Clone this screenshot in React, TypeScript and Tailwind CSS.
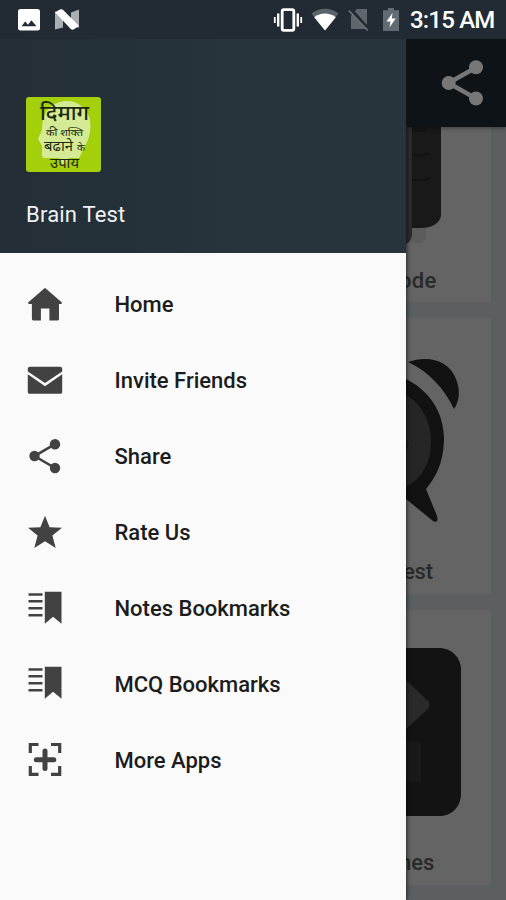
import type { ReactNode } from "react";

function HomeIcon() {
  return (
    <svg viewBox="0 0 36 36" className="size-9 fill-[#424242]">
      <path d="M17.2 1.4a1.2 1.2 0 0 1 1.6 0L34.6 15.3c.7.7.3 1.7-.7 1.7H32V32.1a1.3 1.3 0 0 1-1.3 1.3H22.4V21.6H13.9V33.4H6.2A1.3 1.3 0 0 1 4.9 32.1V17H2.1c-1 0-1.4-1-.7-1.7Z" />
    </svg>
  );
}

function MailIcon() {
  return (
    <svg viewBox="0 0 36 36" className="size-9 fill-[#424242]">
      <path d="M3 3.8H33C34.3 3.8 35.2 4.6 35.2 5.8V8.6L18 20 .8 8.6V5.8C.8 4.6 1.7 3.8 3 3.8Z" />
      <path d="M.8 11.2 18 23.3 35.2 11.2V28.9C35.2 30 34.5 30.7 33.4 30.7H2.6C1.5 30.7 .8 30 .8 28.9Z" />
    </svg>
  );
}

function ShareIcon() {
  return (
    <svg viewBox="0 0 36 36" className="size-9 fill-[#424242] stroke-[#424242]">
      <path d="M28 5.2 7.5 17 28 29" fill="none" strokeWidth="2.6" />
      <circle cx="28" cy="5.2" r="5.2" stroke="none" />
      <circle cx="7.5" cy="17" r="5.2" stroke="none" />
      <circle cx="28" cy="29" r="5.2" stroke="none" />
    </svg>
  );
}

function StarIcon() {
  return (
    <svg viewBox="0 0 36 36" className="size-9 fill-[#424242]">
      <path d="M18 .8 22.6 12.2 35 12.8 25.4 20.6 28.7 33 18 26.3 7.3 33 10.6 20.6 1 12.8 13.4 12.2Z" />
    </svg>
  );
}

function BookmarkIcon() {
  return (
    <svg viewBox="0 0 36 36" className="size-9 fill-[#424242]">
      <path d="M1.5 2.3H15.5V4.8H1.5ZM1.5 9.1H15.5V11.6H1.5ZM1.5 15.9H15.5V18.4H1.5ZM1.5 22.9H15.5V25.4H1.5Z" />
      <path d="M17.8 .7H34.5V32.8L26.1 25.7 17.8 32.8Z" />
    </svg>
  );
}

function MoreIcon() {
  return (
    <svg viewBox="0 0 36 36" className="size-9" fill="none" stroke="#424242">
      <path d="M3.3 11V2.5H11.5M24 2.5H32.7V11M3.3 24V32.3H11.5M24 32.3H32.7V24" strokeWidth="3.2" />
      <path d="M18 9V26.4M9.3 17.7H26.8" strokeWidth="5" strokeLinecap="round" />
    </svg>
  );
}

const items: { label: string; icon: ReactNode }[] = [
  { label: "Home", icon: <HomeIcon /> },
  { label: "Invite Friends", icon: <MailIcon /> },
  { label: "Share", icon: <ShareIcon /> },
  { label: "Rate Us", icon: <StarIcon /> },
  { label: "Notes Bookmarks", icon: <BookmarkIcon /> },
  { label: "MCQ Bookmarks", icon: <BookmarkIcon /> },
  { label: "More Apps", icon: <MoreIcon /> },
];

function StatusBar() {
  return (
    <div className="flex h-[39px] shrink-0 items-center bg-[#222b33] pr-3 pl-[18px] text-white">
      <svg viewBox="0 0 22 22" className="size-[22px]">
        <rect x="0" y="0" width="22" height="21.5" rx="2.5" fill="#fff" />
        <path d="M3.5 17.3 7.2 12.6 10 15.8 13.4 11.3 18.5 17.3Z" fill="#222c34" />
      </svg>
      <svg viewBox="0 0 26 22" className="ml-[14px] h-[22px] w-[26px]">
        <path d="M1 2.5 9 5V18.5L1 20.5ZM25 .5V19L17 15.5V3.5Z" fill="#a9afb2" />
        <path d="M1 3.2 6.5 .3Q8 0 9.2 1L25 17 19.5 20.5Q18 21 16.500 19.8Z" fill="#fff" />
      </svg>

      <div className="ml-auto flex items-center">
        <svg viewBox="0 0 30 24" className="h-6 w-[30px]" fill="none" stroke="#fff">
          <rect x="9.2" y="1.7" width="11.6" height="20.6" rx="1.5" strokeWidth="2.8" />
          <path d="M5.2 5.5V18.5M24.8 5.5V18.5" strokeWidth="2.4" />
          <path d="M1.8 9V15M28.2 9V15" strokeWidth="1.8" />
        </svg>
        <svg viewBox="0 0 28 24" className="ml-[8px] h-6 w-7">
          <path d="M.5 5.5C8 -.8 20 -.8 27.5 5.5L14 22.5Z" fill="#5b646a" />
          <path d="M3.2 9.2C9.5 4.2 18.5 4.2 24.8 9.2L14 22.5Z" fill="#fff" />
        </svg>
        <svg viewBox="0 0 22 24" className="ml-[9px] h-6 w-[22px]">
          <path d="M9 1H19V21H3V7.5Z" fill="#5f676d" />
          <path d="M2 1 20 21" stroke="#222b33" strokeWidth="4" />
          <path d="M.8 2.5 19.8 22.5" stroke="#6b7378" strokeWidth="1.8" />
        </svg>
        <svg viewBox="0 0 16 24" className="ml-[13px] h-6 w-4">
          <path d="M5 0H11V2.2H16V23H0V2.2H5Z" fill="#626b71" />
          <path d="M9.5 5 3.5 13.5H7.4L6.5 19.5 12.7 10.5H8.8Z" fill="#fff" />
        </svg>
        <span className="ml-[11px] w-[84px] text-[24px] leading-none font-medium tracking-[-0.8px] whitespace-nowrap">
          3:15 AM
        </span>
      </div>
    </div>
  );
}

function AppLogo() {
  return (
    <svg viewBox="0 0 75 75" className="size-[75px]">
      <rect width="75" height="75" rx="3" fill="#a4cf0b" />
      <path
        d="M34 5C49 1 61 10 64 23C66 37 61 45 57 53L53 61H43L38 69L33 61H18Q15 60 16 54V49L12 42L16 33C16 17 22 8 34 5Z"
        fill="#d5ea94"
      />
      <g fill="#1d2811" textAnchor="middle" fontFamily="'Noto Sans', 'Noto Sans Devanagari', sans-serif">
        <text x="38.5" y="22.5" fontSize="20" fontWeight="500" textLength="49" lengthAdjust="spacingAndGlyphs">दिमाग</text>
        <text x="38.5" y="38.5" fontSize="10" textLength="37" lengthAdjust="spacingAndGlyphs">की शक्ति</text>
        <text x="32.5" y="54" fontSize="14" textLength="29" lengthAdjust="spacingAndGlyphs">बढाने</text>
        <text x="55" y="54" fontSize="9" textLength="8" lengthAdjust="spacingAndGlyphs">के</text>
        <text x="38.5" y="70.5" fontSize="14" textLength="29" lengthAdjust="spacingAndGlyphs">उपाय</text>
      </g>
    </svg>
  );
}

function Drawer() {
  return (
    <aside className="z-10 flex w-[406px] shrink-0 flex-col bg-[#fafafa] shadow-[1px_0_4px_rgba(0,0,0,0.6)]">
      <header className="flex h-[214px] shrink-0 flex-col bg-linear-to-r from-[#232e37] to-[#27343c] to-60% pt-[58px] pl-[26px]">
        <AppLogo />
        <h1 className="mt-[30px] text-[22px] leading-[26px] tracking-[0.2px] text-[#f0f3f5]">Brain Test</h1>
      </header>
      <nav className="mt-[14px] flex flex-col">
        {items.map((item) => (
          <a key={item.label} className="flex h-[75.9px] items-center pl-[27px]">
            {item.icon}
            <span className="ml-[51.5px] text-[22px] font-medium text-[#1c1c1c]">{item.label}</span>
          </a>
        ))}
      </nav>
    </aside>
  );
}

// Strip of the main screen left visible next to the open drawer
function DimmedScreen() {
  return (
    <main className="flex flex-1 flex-col overflow-hidden bg-[#5b5f60] text-[22px] leading-[26px] font-medium text-[#292929]">
      <div className="z-10 flex h-[88px] shrink-0 items-center bg-[#0d1317] pl-[35px] shadow-[0_1px_4px_rgba(0,0,0,0.4)]">
        <svg viewBox="0 0 44 48" className="h-12 w-11" fill="#777">
          <path d="M35 8.5 7.5 24 35 39.5" fill="none" stroke="#777" strokeWidth="4.4" />
          <circle cx="35" cy="8.2" r="7" />
          <circle cx="7.7" cy="24" r="7" />
          <circle cx="35" cy="39.5" r="7" />
        </svg>
      </div>

      <section className="mr-[15px] flex h-[175px] shrink-0 flex-col overflow-hidden bg-[#646464]">
        <svg viewBox="0 0 85 128" className="h-32 w-[85px] shrink-0">
          <path d="M4 90H20V112Q14 120 4 114Z" fill="#5c5c5c" />
          <path d="M0 0H6V108Q5 115 0 117Z" fill="#2c2c2c" />
          <path d="M6 0H35V89Q32 101 14 101H6Z" fill="#191919" />
          <path d="M6 3Q15 5 20 3M6 27Q13 30 23 27M6 52Q14 55 24 51" fill="none" stroke="#131313" strokeWidth="2" />
        </svg>
        <span className="mt-[13px] -ml-[7px] tracking-[0.3px]">ode</span>
      </section>

      <section className="mt-4 mr-[15px] flex h-[276px] shrink-0 flex-col overflow-hidden rounded-r-[3px] bg-[#646464]">
        <svg viewBox="0 0 85 240" className="h-60 w-[85px] shrink-0">
          <path d="M2 44C22 37 43 42 50 61C55 73 53 84 48 91C38 70 23 54 2 44Z" fill="#121212" />
          <path d="M0 61C22 72 37 92 38 119C38 146 29 160 20 171L31 198Q33 206 27 203L0 181Z" fill="#121212" />
          <path d="M0 77C15 86 25 102 25 124C25 145 16 160 0 169Z" fill="#262626" />
          <path d="M0 122 3 126 0 132Z" fill="#181818" />
        </svg>
        <span className="mt-px -ml-[3px] tracking-[-0.2px]">est</span>
      </section>

      <section className="mt-4 mr-[15px] flex h-[275px] shrink-0 flex-col overflow-hidden rounded-r-[3px] bg-[#646464]">
        <svg viewBox="0 0 85 240" className="h-60 w-[85px] shrink-0">
          <path d="M0 38H33C45 38 55 47 55 60V184C55 196 46 206 34 206H0Z" fill="#131313" />
          <path d="M0 70 22 91Q25 95 22 99L0 119Z" fill="#2a2a2a" />
          <path d="M0 132H15V172H0Z" fill="#191919" />
        </svg>
        <span className="-ml-[7px]">nes</span>
      </section>
    </main>
  );
}

export default function App() {
  return (
    <div className="flex h-[900px] w-[506px] flex-col overflow-hidden bg-[#5b5f60] font-['Roboto','Noto_Sans',sans-serif]">
      <StatusBar />
      <div className="flex min-h-0 flex-1 overflow-hidden">
        <Drawer />
        <DimmedScreen />
      </div>
    </div>
  );
}
